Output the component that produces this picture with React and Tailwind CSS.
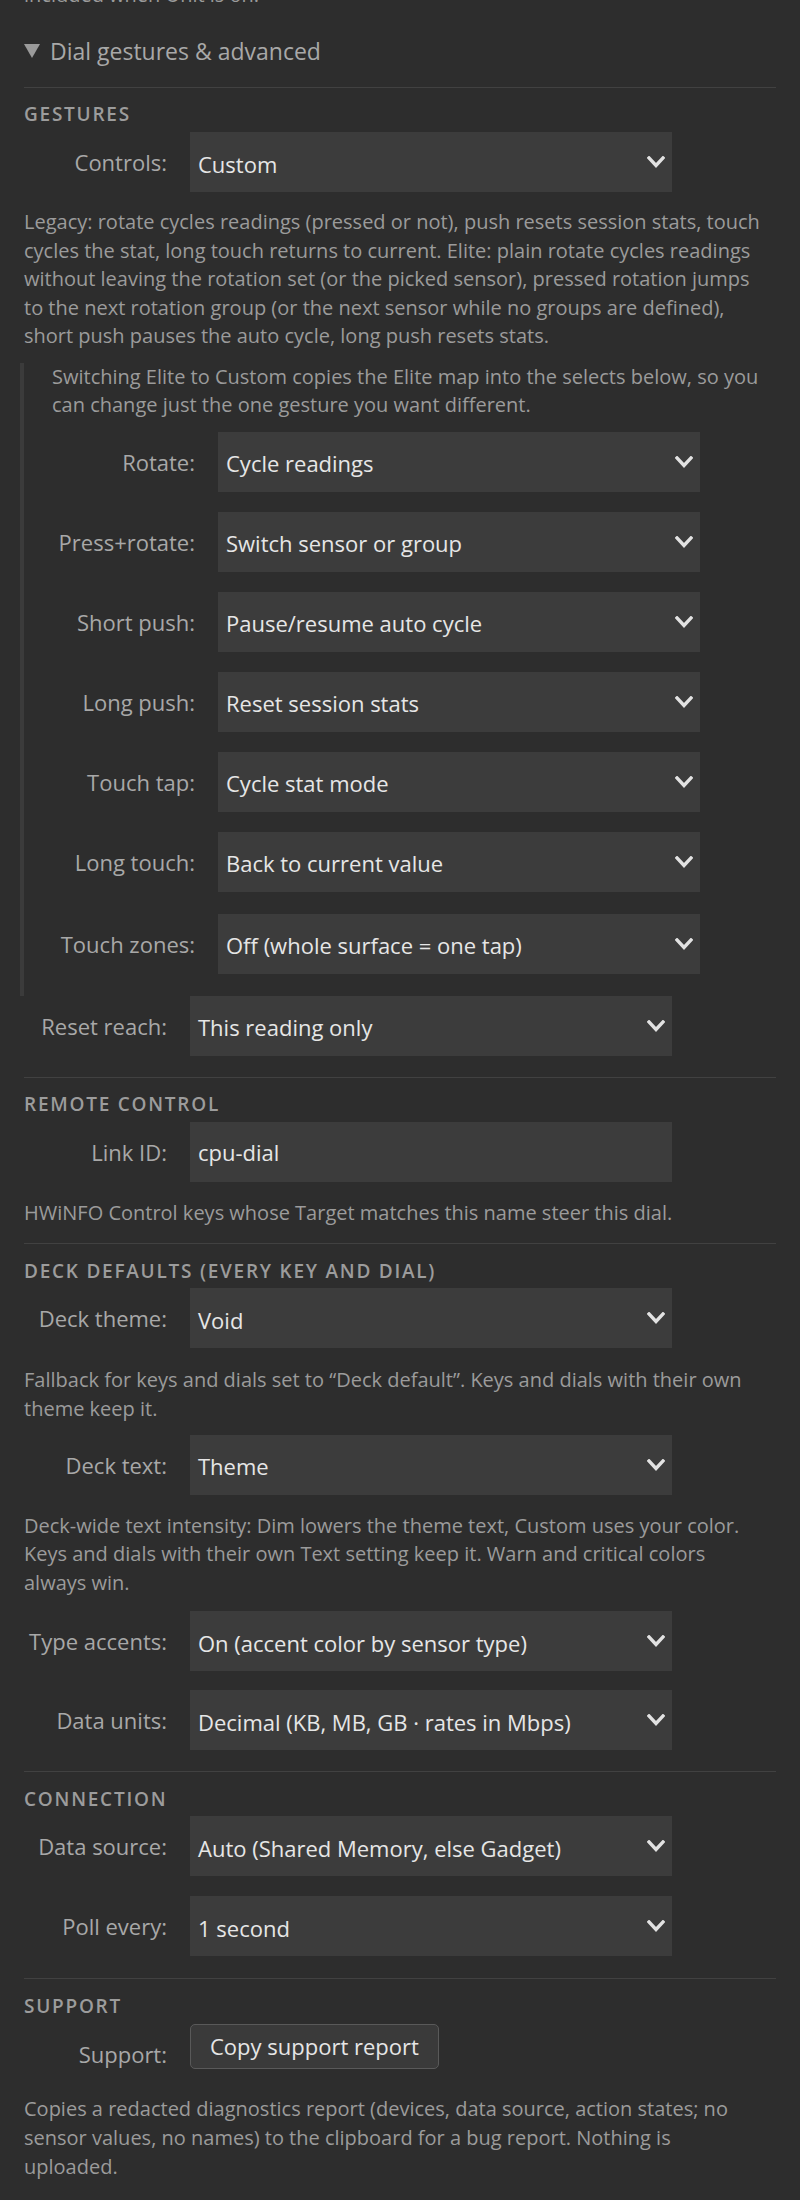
const font = { fontFamily: '"Open Sans", "Noto Sans", sans-serif' }

const Chevron = () => (
  <svg width="18" height="12" viewBox="0 0 18 12" className="shrink-0">
    <polyline points="2,2 9,9.5 16,2" fill="none" stroke="#e2e2e2" strokeWidth="3.4" strokeLinecap="square" />
  </svg>
)

const Select = ({ value }) => (
  <div className="flex h-[60px] w-[482px] shrink-0 items-center justify-between bg-[#3c3c3c] pl-2 pr-[7px]">
    <span className="pt-[3px] text-[22px] leading-[28px] text-[#e6e6e6] whitespace-nowrap">{value}</span>
    <Chevron />
  </div>
)

const Row = ({ label, children, className = "" }) => (
  <div className={`flex items-start gap-[23px] ${className}`}>
    <label className="w-[143px] shrink-0 pt-[16px] text-right text-[22px] leading-[28px] text-[#a8a8a8] whitespace-nowrap">
      {label}
    </label>
    {children}
  </div>
)

const Heading = ({ children, className = "" }) => (
  <h3 className={`text-[19px] leading-[24px] font-semibold tracking-[1.75px] text-[#9c9c9c] uppercase ${className}`}>
    {children}
  </h3>
)

const Help = ({ children, className = "" }) => (
  <p className={`max-w-[745px] text-[20px] leading-[28.6px] text-[#9b9b9b] ${className}`}>{children}</p>
)

const Divider = ({ className = "" }) => <div className={`h-px bg-[#414141] ${className}`} />

const gestures = [
  ["Rotate:", "Cycle readings"],
  ["Press+rotate:", "Switch sensor or group"],
  ["Short push:", "Pause/resume auto cycle"],
  ["Long push:", "Reset session stats"],
  ["Touch tap:", "Cycle stat mode"],
  ["Long touch:", "Back to current value"],
]

export default function App() {
  return (
    <div className="min-h-[2200px] overflow-hidden bg-[#2d2d2d] px-6" style={font}>
      {/* tail of the previous section, scrolled mostly out of view */}
      <p className="-mt-[19px] text-[20px] leading-[28px] text-[#9b9b9b]">included when Unit is on.</p>

      <div className="mt-[26px] flex items-center gap-[10px]">
        <svg width="16" height="14" viewBox="0 0 16 14">
          <polygon points="0,0 16,0 8,14" fill="#9a9a9a" />
        </svg>
        <span className="text-[23px] leading-[32px] text-[#a8a8a8]">Dial gestures &amp; advanced</span>
      </div>

      <Divider className="mt-[20px]" />
      <Heading className="mt-[14px]">Gestures</Heading>
      <Row label="Controls:" className="mt-[6px]">
        <Select value="Custom" />
      </Row>
      <Help className="mt-[16px]">
        Legacy: rotate cycles readings (pressed or not), push resets session stats, touch cycles the stat, long
        touch returns to current. Elite: plain rotate cycles readings without leaving the rotation set (or the
        picked sensor), pressed rotation jumps to the next rotation group (or the next sensor while no groups
        are defined), short push pauses the auto cycle, long push resets stats.
      </Help>

      {/* custom gesture map */}
      <div className="-ml-1 mt-[12px] border-l-4 border-[#3b3b3b] pb-[22px] pl-7">
        <p className="max-w-[720px] text-[20px] leading-[28.4px] text-[#9b9b9b]">
          Switching Elite to Custom copies the Elite map into the selects below, so you can change just the one
          gesture you want different.
        </p>
        <div className="mt-[12px] flex flex-col gap-[20px]">
          {gestures.map(([label, value]) => (
            <Row key={label} label={label}>
              <Select value={value} />
            </Row>
          ))}
          <Row label="Touch zones:" className="mt-[2px]">
            <Select value="Off (whole surface = one tap)" />
          </Row>
        </div>
      </div>
      <Row label="Reset reach:">
        <Select value="This reading only" />
      </Row>

      <Divider className="mt-[21px]" />
      <Heading className="mt-[14px]">Remote control</Heading>
      <Row label="Link ID:" className="mt-[6px]">
        <input
          readOnly
          value="cpu-dial"
          className="h-[60px] w-[482px] bg-[#3c3c3c] px-2 text-[22px] text-[#e6e6e6] outline-none"
        />
      </Row>
      <Help className="mt-[17px]">HWiNFO Control keys whose Target matches this name steer this dial.</Help>

      <Divider className="mt-[16px]" />
      <Heading className="mt-[15px]">Deck defaults (every key and dial)</Heading>
      <Row label="Deck theme:" className="mt-[5px]">
        <Select value="Void" />
      </Row>
      <Help className="mt-[18px]">
        Fallback for keys and dials set to “Deck default”. Keys and dials with their own theme keep it.
      </Help>
      <Row label="Deck text:" className="mt-[11px]">
        <Select value="Theme" />
      </Row>
      <Help className="mt-[17px]">
        Deck-wide text intensity: Dim lowers the theme text, Custom uses your color. Keys and dials with their
        own Text setting keep it. Warn and critical colors always win.
      </Help>
      <Row label="Type accents:" className="mt-[14px]">
        <Select value="On (accent color by sensor type)" />
      </Row>
      <Row label="Data units:" className="mt-[19px]">
        <Select value="Decimal (KB, MB, GB · rates in Mbps)" />
      </Row>

      <Divider className="mt-[21px]" />
      <Heading className="mt-[15px]">Connection</Heading>
      <Row label="Data source:" className="mt-[5px]">
        <Select value="Auto (Shared Memory, else Gadget)" />
      </Row>
      <Row label="Poll every:" className="mt-[20px]">
        <Select value="1 second" />
      </Row>

      <Divider className="mt-[22px]" />
      <Heading className="mt-[15px]">Support</Heading>
      <Row label="Support:" className="mt-[6px]">
        <button className="h-[45px] rounded-[5px] border border-[#595959] bg-[#3a3a3a] px-[19px] text-[22px] text-[#e6e6e6] whitespace-nowrap">
          Copy support report
        </button>
      </Row>
      <Help className="mt-[26px]">
        Copies a redacted diagnostics report (devices, data source, action states; no sensor values, no names)
        to the clipboard for a bug report. Nothing is uploaded.
      </Help>
    </div>
  )
}
